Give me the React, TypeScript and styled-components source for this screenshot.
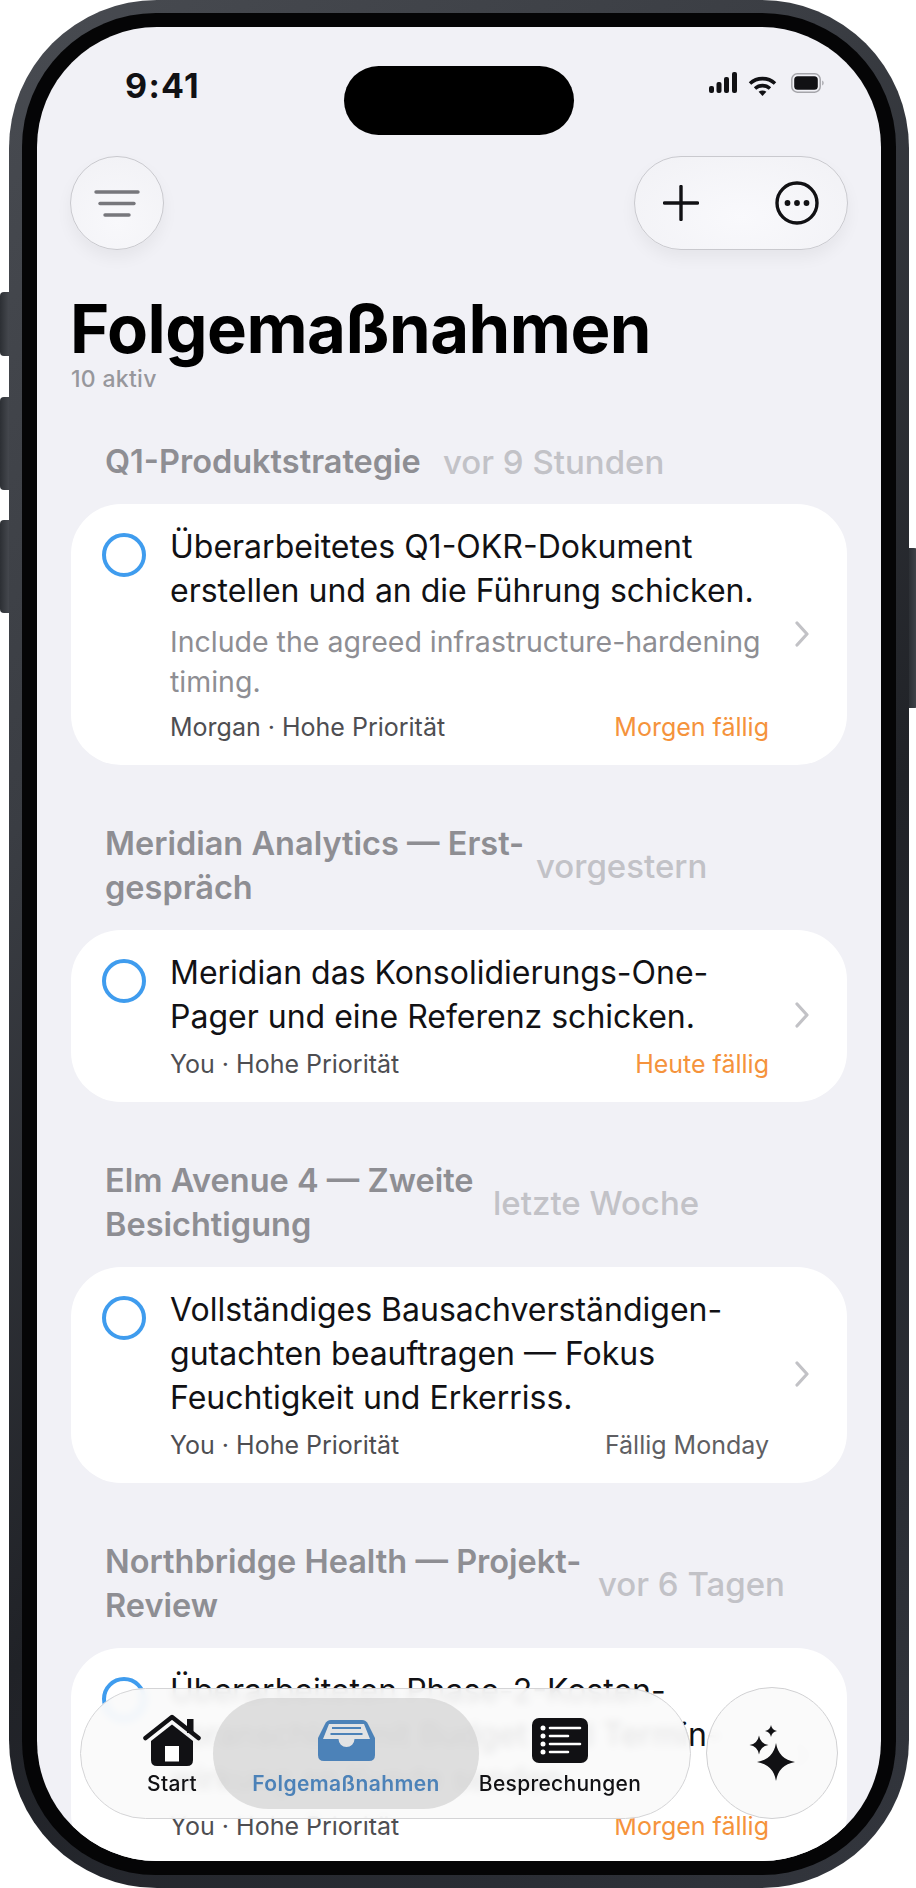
import React from 'react';
import styled, { createGlobalStyle } from 'styled-components';

const GlobalStyle = createGlobalStyle`
  html, body { margin: 0; padding: 0; background: #fff; }
  body { font-family: Inter, "Liberation Sans", sans-serif; }
  * { box-sizing: border-box; }
`;

const Stage = styled.div`
  width: 916px;
  height: 1888px;
  display: flex;
  overflow: hidden;
  background: #fff;
`;

const Rail = styled.div<{ $top: number; $side: 'left' | 'right' }>`
  flex: 0 0 8px;
  padding-top: ${(p) => p.$top}px;
  display: flex;
  flex-direction: column;
  align-items: ${(p) => (p.$side === 'left' ? 'flex-end' : 'flex-start')};
`;

const HardButton = styled.div<{ $h: number; $gap?: number; $side: 'left' | 'right' }>`
  width: 9px;
  height: ${(p) => p.$h}px;
  margin-top: ${(p) => p.$gap ?? 0}px;
  background: linear-gradient(90deg, #2c2f34, #45484e);
  border-radius: ${(p) => (p.$side === 'left' ? '4px 0 0 4px' : '0 4px 4px 0')};
`;

const Bezel = styled.div`
  flex: 0 0 900px;
  height: 1888px;
  padding: 13px;
  border-radius: 148px;
  background: linear-gradient(135deg, #484b51 0%, #3a3d43 30%, #202227 60%, #2a2d34 85%, #34373e 100%);
`;

const BlackRing = styled.div`
  width: 874px;
  height: 1862px;
  padding: 14px 15px;
  border-radius: 134px;
  background: #050506;
`;

const Screen = styled.div`
  position: relative;
  width: 844px;
  height: 1834px;
  overflow: hidden;
  border-radius: 120px;
  background: #f1f1f6;
`;

const StatusBar = styled.div`
  display: flex;
  padding: 39px 57px 0 88px;
`;

const Clock = styled.div`
  width: 219px;
  font-size: 34px;
  line-height: 40px;
  font-weight: 700;
  letter-spacing: 1.3px;
  color: #111114;
`;

const Island = styled.div`
  width: 230px;
  height: 69px;
  border-radius: 35px;
  background: #000;
`;

const StatusIcons = styled.div`
  flex: 1;
  height: 62px;
  display: flex;
  justify-content: flex-end;
  padding-top: 6px;
`;

const TopBar = styled.div`
  display: flex;
  justify-content: space-between;
  padding: 21px 33px 0;
`;

const GlassRound = styled.div`
  width: 94px;
  height: 94px;
  display: flex;
  align-items: center;
  justify-content: center;
  border-radius: 50%;
  border: 1px solid #c9c9ce;
  background: radial-gradient(circle at 50% 70%, #f8f8fb, #f1f1f5);
  box-shadow: 0 8px 16px rgba(0, 0, 0, 0.05);
`;

const GlassPill = styled.div`
  width: 214px;
  height: 94px;
  display: flex;
  align-items: center;
  justify-content: space-between;
  padding: 0 28px;
  border-radius: 47px;
  border: 1px solid #c9c9ce;
  background: radial-gradient(ellipse at 50% 65%, #f9f9fc, #f1f1f5);
  box-shadow: 0 8px 16px rgba(0, 0, 0, 0.05);
`;

const Content = styled.div`
  padding: 0 34px;
`;

const PageTitle = styled.h1`
  margin: 44px 0 0 -1px;
  font-size: 67px;
  line-height: 70px;
  font-weight: 700;
  letter-spacing: -0.5px;
  color: #000;
`;

const SubTitle = styled.div`
  margin-top: 2px;
  font-size: 23px;
  line-height: 26px;
  font-weight: 500;
  letter-spacing: 0.3px;
  color: #97979c;
`;

const Section = styled.section`
  margin-top: 57px;
  &:first-of-type {
    margin-top: 48px;
  }
`;

const SectionHead = styled.div`
  display: flex;
  align-items: center;
  gap: 10px;
  padding-left: 34px;
  margin-bottom: 20px;
`;

const MeetingName = styled.div<{ $width: number }>`
  width: ${(p) => p.$width}px;
  flex: none;
  font-size: 32.5px;
  line-height: 44px;
  font-weight: 600;
  color: #8e8e93;
`;

const MeetingTime = styled.div`
  font-size: 33px;
  line-height: 44px;
  font-weight: 500;
  white-space: nowrap;
  color: #c2c2c7;
`;

const Card = styled.div`
  display: flex;
  align-items: flex-start;
  padding: 21px 38px 23px 31px;
  border-radius: 50px;
  background: #fff;
`;

const Check = styled.div`
  flex: 0 0 44px;
  height: 44px;
  margin: 8px 24px 0 0;
  border-radius: 50%;
  border: 4px solid #3f9cee;
`;

const CardBody = styled.div`
  flex: 0 0 599px;
`;

const TaskTitle = styled.div`
  font-size: 32px;
  line-height: 44px;
  font-weight: 400;
  color: #111114;
`;

const TaskNote = styled.div`
  margin-top: 9px;
  font-size: 28.5px;
  line-height: 40px;
  color: #8e8e93;
`;

const MetaRow = styled.div`
  display: flex;
  justify-content: space-between;
  margin-top: 10px;
  font-size: 25px;
  line-height: 30px;
`;

const Owner = styled.span`
  color: #4e4e52;
`;

const Due = styled.span<{ $overdue?: boolean }>`
  color: ${(p) => (p.$overdue ? '#f5933c' : '#5f5f63')};
`;

const Chevron = styled.div`
  flex: 0 0 14px;
  margin-left: 26px;
  align-self: center;
  display: flex;
`;

const Nav = styled.nav`
  position: absolute;
  left: 43px;
  bottom: 42px;
  width: 611px;
  height: 131px;
  display: grid;
  grid-template-columns: 132px 266px 213px;
  padding: 9px 0;
  border-radius: 66px;
  border: 1px solid #d4d4d6;
  background: rgba(250, 250, 250, 0.9);
  backdrop-filter: blur(4px);
`;

const Tab = styled.div<{ $active?: boolean; $padLeft?: number; $padRight?: number }>`
  display: flex;
  flex-direction: column;
  align-items: center;
  padding: 16px ${(p) => p.$padRight ?? 0}px 0 ${(p) => p.$padLeft ?? 0}px;
  border-radius: 57px;
  background: ${(p) => (p.$active ? 'rgba(205, 205, 205, 0.62)' : 'transparent')};
`;

const TabIcon = styled.div`
  height: 52px;
  display: flex;
  align-items: center;
  justify-content: center;
`;

const TabLabel = styled.div<{ $active?: boolean }>`
  margin-top: 6px;
  font-size: 21px;
  line-height: 24px;
  font-weight: ${(p) => (p.$active ? 600 : 500)};
  letter-spacing: ${(p) => (p.$active ? 0.4 : 0.3)}px;
  white-space: nowrap;
  color: ${(p) => (p.$active ? '#4c82b8' : '#111114')};
`;

const AskButton = styled.div`
  position: absolute;
  left: 669px;
  bottom: 42px;
  width: 132px;
  height: 132px;
  display: flex;
  align-items: center;
  justify-content: center;
  border-radius: 50%;
  border: 1px solid #d0d0d2;
  background: rgba(250, 250, 250, 0.92);
  backdrop-filter: blur(5px);
`;

function star(cx: number, cy: number, r: number) {
  const k = r * 0.14;
  return `M${cx} ${cy - r}Q${cx + k} ${cy - k} ${cx + r} ${cy}Q${cx + k} ${cy + k} ${cx} ${cy + r}Q${cx - k} ${cy + k} ${cx - r} ${cy}Q${cx - k} ${cy - k} ${cx} ${cy - r}Z`;
}

const SignalIcon = () => (
  <svg width="28" height="22" viewBox="0 0 28 22" fill="#111114">
    <rect x="0" y="14" width="5" height="7" rx="2" />
    <rect x="7.5" y="10" width="5" height="11" rx="2" />
    <rect x="15" y="5" width="5" height="16" rx="2" />
    <rect x="23" y="0" width="5" height="21" rx="2" />
  </svg>
);

const WifiIcon = () => (
  <svg width="29" height="20" viewBox="0 0 29 20" fill="none" stroke="#111114" strokeWidth="3.6" style={{ margin: '4px 14px 0 11px' }}>
    <path d="M2 7.5C9 1 20 1 27 7.5" />
    <path d="M7 12.5C11.5 8.6 17.5 8.6 22 12.5" />
    <path d="M14.5 20L10.6 15.8C13 14 16 14 18.4 15.8Z" fill="#111114" stroke="none" />
  </svg>
);

const BatteryIcon = () => (
  <svg width="33" height="20" viewBox="0 0 33 20" fill="none" style={{ marginTop: '1px' }}>
    <rect x="0.8" y="0.8" width="28.4" height="18.4" rx="5.5" stroke="#a5a5aa" strokeWidth="1.5" />
    <rect x="3.2" y="3.2" width="23.6" height="13.6" rx="3.5" fill="#111114" />
    <path d="M31 7.5C32.3 8 32.8 9 32.8 10C32.8 11 32.3 12 31 12.5Z" fill="#b5b5ba" />
  </svg>
);

const FilterIcon = () => (
  <svg width="46" height="28" viewBox="0 0 46 28" stroke="#77777c" strokeWidth="3.4" strokeLinecap="round">
    <path d="M2 3H44" />
    <path d="M6 14.500H40" />
    <path d="M11 26H35" />
  </svg>
);

const PlusIcon = () => (
  <svg width="36" height="36" viewBox="0 0 36 36" stroke="#111114" strokeWidth="3.4" strokeLinecap="round">
    <path d="M18 1.500V34.500" />
    <path d="M1.500 18H34.500" />
  </svg>
);

const MoreIcon = () => (
  <svg width="44" height="44" viewBox="0 0 44 44" fill="none">
    <circle cx="22" cy="22" r="20" stroke="#111114" strokeWidth="3.4" />
    <circle cx="12.500" cy="22" r="2.900" fill="#111114" />
    <circle cx="22" cy="22" r="2.900" fill="#111114" />
    <circle cx="31.500" cy="22" r="2.900" fill="#111114" />
  </svg>
);

const ChevronIcon = () => (
  <svg width="14" height="26" viewBox="0 0 14 26" fill="none" stroke="#c2c2c6" strokeWidth="3.2" strokeLinecap="round" strokeLinejoin="round">
    <path d="M2 2L12 13L2 24" />
  </svg>
);

const HomeIcon = () => (
  <svg width="58" height="52" viewBox="0 0 58 52">
    <rect x="44" y="5" width="6.500" height="14" fill="#111114" />
    <path d="M2.500 24L29 3L55.500 24" fill="none" stroke="#111114" strokeWidth="4.500" strokeLinecap="round" strokeLinejoin="round" />
    <path d="M8 27L29 10.500L50 27V46Q50 52 44 52H14Q8 52 8 46Z" fill="#111114" />
    <rect x="22" y="32" width="14" height="15.500" fill="#fff" />
  </svg>
);

const TrayIcon = () => (
  <svg width="57" height="41" viewBox="0 0 57 41">
    <path d="M13 0H44Q48 0 50 4L57 18V35Q57 41 51 41H6Q0 41 0 35V18L7 4Q9 0 13 0Z" fill="#4c82b8" />
    <path d="M11 4H46L52 19H36.500A8 8 0 0 1 20.500 19H5Z" fill="#e2e3e4" />
    <path d="M14 8H43M12.500 14H44.500" stroke="#4c82b8" strokeWidth="2" fill="none" />
  </svg>
);

const ListIcon = () => (
  <svg width="56" height="45" viewBox="0 0 56 45">
    <rect width="56" height="45" rx="7" fill="#111114" />
    <g fill="#fff">
      <circle cx="11" cy="10" r="2.500" />
      <circle cx="11" cy="18" r="2.500" />
      <circle cx="11" cy="26" r="2.500" />
      <circle cx="11" cy="34" r="2.500" />
    </g>
    <path d="M18 10H48M18 18H36M18 26H48M18 34H36" stroke="#fff" strokeWidth="2.600" strokeLinecap="round" />
  </svg>
);

const SparkleIcon = () => (
  <svg width="46" height="58" viewBox="0 0 46 58" fill="#111114">
    <path d={star(27, 38, 19)} />
    <path d={star(10, 21, 9.500)} />
    <path d={star(22, 7, 6)} />
  </svg>
);

type Task = {
  title: string;
  note?: string;
  owner: string;
  due: string;
  overdue?: boolean;
};

type Group = {
  name: string;
  when: string;
  width: number;
  task: Task;
};

const groups: Group[] = [
  {
    name: 'Q1-Produktstrategie',
    when: 'vor 9 Stunden',
    width: 328,
    task: {
      title: 'Überarbeitetes Q1-OKR-Dokument erstellen und an die Führung schicken.',
      note: 'Include the agreed infrastructure-hardening timing.',
      owner: 'Morgan · Hohe Priorität',
      due: 'Morgen fällig',
      overdue: true,
    },
  },
  {
    name: 'Meridian Analytics — Erst-gespräch',
    when: 'vorgestern',
    width: 421,
    task: {
      title: 'Meridian das Konsolidierungs-One-Pager und eine Referenz schicken.',
      owner: 'You · Hohe Priorität',
      due: 'Heute fällig',
      overdue: true,
    },
  },
  {
    name: 'Elm Avenue 4 — Zweite Besichtigung',
    when: 'letzte Woche',
    width: 378,
    task: {
      title: 'Vollständiges Bausachverständigen-gutachten beauftragen — Fokus Feuchtigkeit und Erkerriss.',
      owner: 'You · Hohe Priorität',
      due: 'Fällig Monday',
    },
  },
  {
    name: 'Northbridge Health — Projekt-Review',
    when: 'vor 6 Tagen',
    width: 483,
    task: {
      title: 'Überarbeiteten Phase-2-Kosten-voranschlag mit Budget und Termin-wirkung an Kunde senden.',
      owner: 'You · Hohe Priorität',
      due: 'Morgen fällig',
      overdue: true,
    },
  },
];

export default function App() {
  return (
    <Stage>
      <GlobalStyle />
      <Rail $top={292} $side="left">
        <HardButton $h={64} $side="left" />
        <HardButton $h={93} $gap={41} $side="left" />
        <HardButton $h={93} $gap={30} $side="left" />
      </Rail>
      <Bezel>
        <BlackRing>
          <Screen>
            <StatusBar>
              <Clock>9:41</Clock>
              <Island />
              <StatusIcons>
                <SignalIcon />
                <WifiIcon />
                <BatteryIcon />
              </StatusIcons>
            </StatusBar>
            <TopBar>
              <GlassRound>
                <FilterIcon />
              </GlassRound>
              <GlassPill>
                <PlusIcon />
                <MoreIcon />
              </GlassPill>
            </TopBar>
            <Content>
              <PageTitle>Folgemaßnahmen</PageTitle>
              <SubTitle>10 aktiv</SubTitle>
              {groups.map((group) => (
                <Section key={group.name}>
                  <SectionHead>
                    <MeetingName $width={group.width}>{group.name}</MeetingName>
                    <MeetingTime>{group.when}</MeetingTime>
                  </SectionHead>
                  <Card>
                    <Check />
                    <CardBody>
                      <TaskTitle>{group.task.title}</TaskTitle>
                      {group.task.note ? <TaskNote>{group.task.note}</TaskNote> : null}
                      <MetaRow>
                        <Owner>{group.task.owner}</Owner>
                        <Due $overdue={group.task.overdue}>{group.task.due}</Due>
                      </MetaRow>
                    </CardBody>
                    <Chevron>
                      <ChevronIcon />
                    </Chevron>
                  </Card>
                </Section>
              ))}
            </Content>
            <Nav>
              <Tab $padLeft={50}>
                <TabIcon>
                  <HomeIcon />
                </TabIcon>
                <TabLabel>Start</TabLabel>
              </Tab>
              <Tab $active>
                <TabIcon>
                  <TrayIcon />
                </TabIcon>
                <TabLabel $active>Folgemaßnahmen</TabLabel>
              </Tab>
              <Tab $padRight={51}>
                <TabIcon>
                  <ListIcon />
                </TabIcon>
                <TabLabel>Besprechungen</TabLabel>
              </Tab>
            </Nav>
            <AskButton>
              <SparkleIcon />
            </AskButton>
          </Screen>
        </BlackRing>
      </Bezel>
      <Rail $top={548} $side="right">
        <HardButton $h={160} $side="right" />
      </Rail>
    </Stage>
  );
}
